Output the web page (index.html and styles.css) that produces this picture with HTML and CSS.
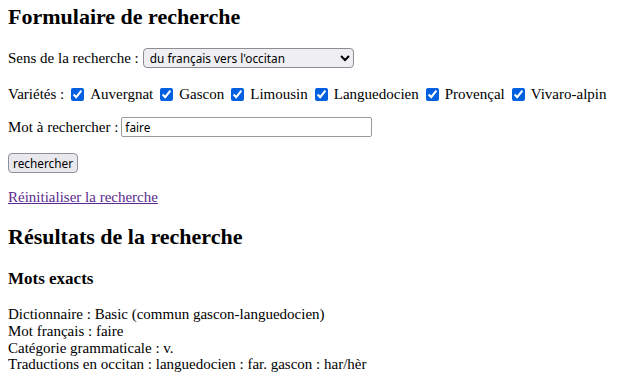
FILE: index.html
```html
<!DOCTYPE html>
<html lang="fr">
<head>
    <meta charset="UTF-8">
    <title>Formulaire de recherche</title>
    <link rel="stylesheet" href="styles.css">
</head>
<body>

    <!-- Formulaire -->
    <h1 class="title">Formulaire de recherche</h1>
    <form class="search-form">
        <div class="row row-sens">
            <label for="sens">Sens de la recherche :</label>
            <select id="sens" name="sens">
                <option>du français vers l'occitan</option>
                <option>de l'occitan vers le français</option>
            </select>
        </div>
        <div class="row row-varietes">
            <span>Variétés :</span>
            <label class="variete"><input type="checkbox" checked> Auvergnat</label>
            <label class="variete"><input type="checkbox" checked> Gascon</label>
            <label class="variete"><input type="checkbox" checked> Limousin</label>
            <label class="variete"><input type="checkbox" checked> Languedocien</label>
            <label class="variete"><input type="checkbox" checked> Provençal</label>
            <label class="variete"><input type="checkbox" checked> Vivaro-alpin</label>
        </div>
        <div class="row row-mot">
            <label for="mot">Mot à rechercher :</label>
            <input type="text" id="mot" name="mot" value="faire">
        </div>
        <div class="row row-submit">
            <button type="submit">rechercher</button>
        </div>
    </form>
    <p class="reset"><a href="#">Réinitialiser la recherche</a></p>

    <!-- Résultats -->
    <h2 class="title results-title">Résultats de la recherche</h2>
    <h3 class="subtitle">Mots exacts</h3>
    <p class="result">
        Dictionnaire : Basic (commun gascon-languedocien)<br>
        Mot français : faire<br>
        Catégorie grammaticale : v.<br>
        Traductions en occitan : languedocien : far. gascon : har/hèr
    </p>

</body>
</html>
```

FILE: styles.css
```css
body {
    font-family: "Liberation Serif", "Times New Roman", serif;
    font-size: 15px;
    margin: 0 8px;
    color: #000;
}
.title {
    font-size: 22px;
    line-height: 26px;
    margin: 4px 0 0;
}
.results-title {
    margin-top: 18px;
}
.subtitle {
    font-size: 17px;
    line-height: 20px;
    margin: 19px 0 0;
}
p {
    margin: 0;
}
a {
    color: #5b2a8e;
}

/* Lignes du formulaire */
.row {
    display: flex;
    align-items: center;
    height: 20px;
    gap: 4px;
}
.row-sens {
    margin-top: 18px;
}
.row-varietes {
    margin-top: 16px;
    gap: 0;
}
.row-mot {
    margin-top: 13px;
    gap: 3px;
}
.row-submit {
    margin-top: 15px;
    height: 21px;
}
.variete {
    display: flex;
    align-items: center;
    gap: 6px;
    margin-left: 7px;
}
.reset {
    margin-top: 16px;
}
.result {
    margin-top: 17px;
    line-height: 16.8px;
}

/* Contrôles */
select, input, button {
    font-family: "Noto Sans", "Open Sans", sans-serif;
    font-size: 11.8px;
    color: #000;
}
select {
    width: 211px;
    height: 20px;
    padding: 0 2px;
    border: 1px solid #8d8d95;
    border-radius: 4px;
    background: #efeff2;
}
input[type="text"] {
    box-sizing: border-box;
    width: 251px;
    height: 20px;
    padding: 1px 3px;
    margin: 0;
    border: 1px solid #9a9a9a;
    border-radius: 2px;
}
input[type="checkbox"] {
    width: 13px;
    height: 13px;
    margin: 0;
    accent-color: #0060df;
}
button {
    height: 20px;
    padding: 0 4px;
    border: 1px solid #8f8f9d;
    border-radius: 4px;
    background: #e9e9ed;
}
```
